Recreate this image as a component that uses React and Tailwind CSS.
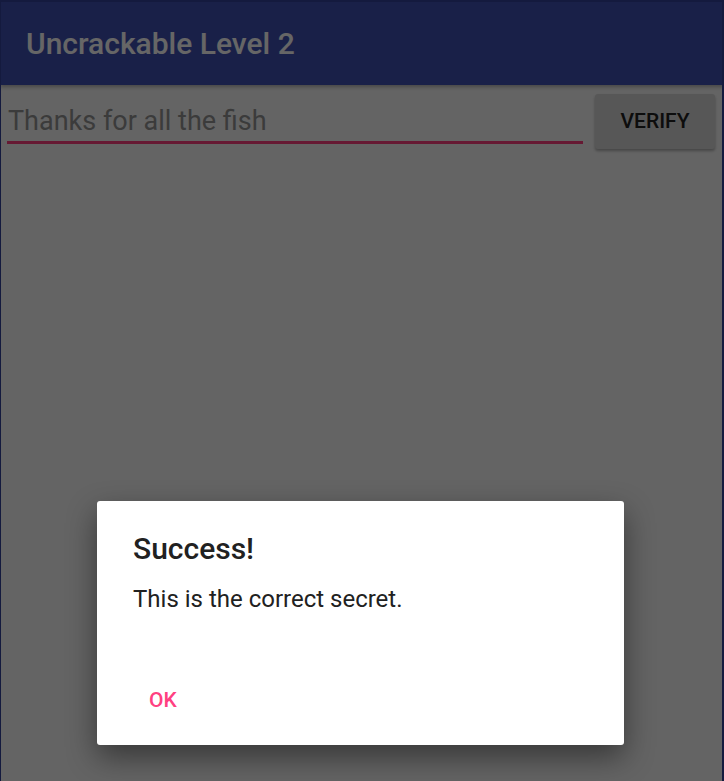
export default function App() {
  return (
    <div className="relative w-[724px] h-[781px] overflow-hidden bg-[#fafafa]" style={{ fontFamily: "Roboto, 'Noto Sans', sans-serif" }}>
      <div className="h-[85px] bg-[#3f51b5] pl-[26px] pt-[29px] shadow-[0_2px_4px_rgba(0,0,0,0.3)] relative z-10">
        <div className="text-white text-[30px] font-medium leading-none">Uncrackable Level 2</div>
      </div>
      <div className="flex items-start pl-[7px] pt-[10px]">
        <div className="w-[576px] flex flex-col pt-[13px]">
          <div className="text-[#949494] text-[27px] leading-none pl-[1px]">Thanks for all the fish</div>
          <div className="h-[3px] mt-[6px] bg-[#ff4081]"></div>
        </div>
        <button className="ml-[12px] -mt-[1px] w-[120px] h-[55px] rounded-[3px] bg-[#d9d9d9] text-[#222] text-[21px] font-medium shadow-[0_2px_3px_rgba(0,0,0,0.3)]">VERIFY</button>
      </div>
      <div className="absolute inset-0 bg-black/60 z-20"></div>
      <div className="absolute inset-0 z-30 pointer-events-none border-l border-r-2 border-t-2 border-[#141a3e]"></div>
      <div className="absolute left-[97px] top-[501px] w-[527px] h-[244px] bg-white rounded-[3px] z-40 shadow-[0_12px_30px_rgba(0,0,0,0.45)] flex flex-col">
        <div className="pl-[36px] pt-[33px] text-[#212121] text-[30px] font-medium leading-none">Success!</div>
        <div className="pl-[36px] pt-[23px] text-[#212121] text-[24px] leading-none">This is the correct secret.</div>
        <div className="mt-auto pb-[34px] pl-[52px]">
          <div className="text-[#ff4081] text-[21px] font-medium leading-none">OK</div>
        </div>
      </div>
    </div>
  );
}
